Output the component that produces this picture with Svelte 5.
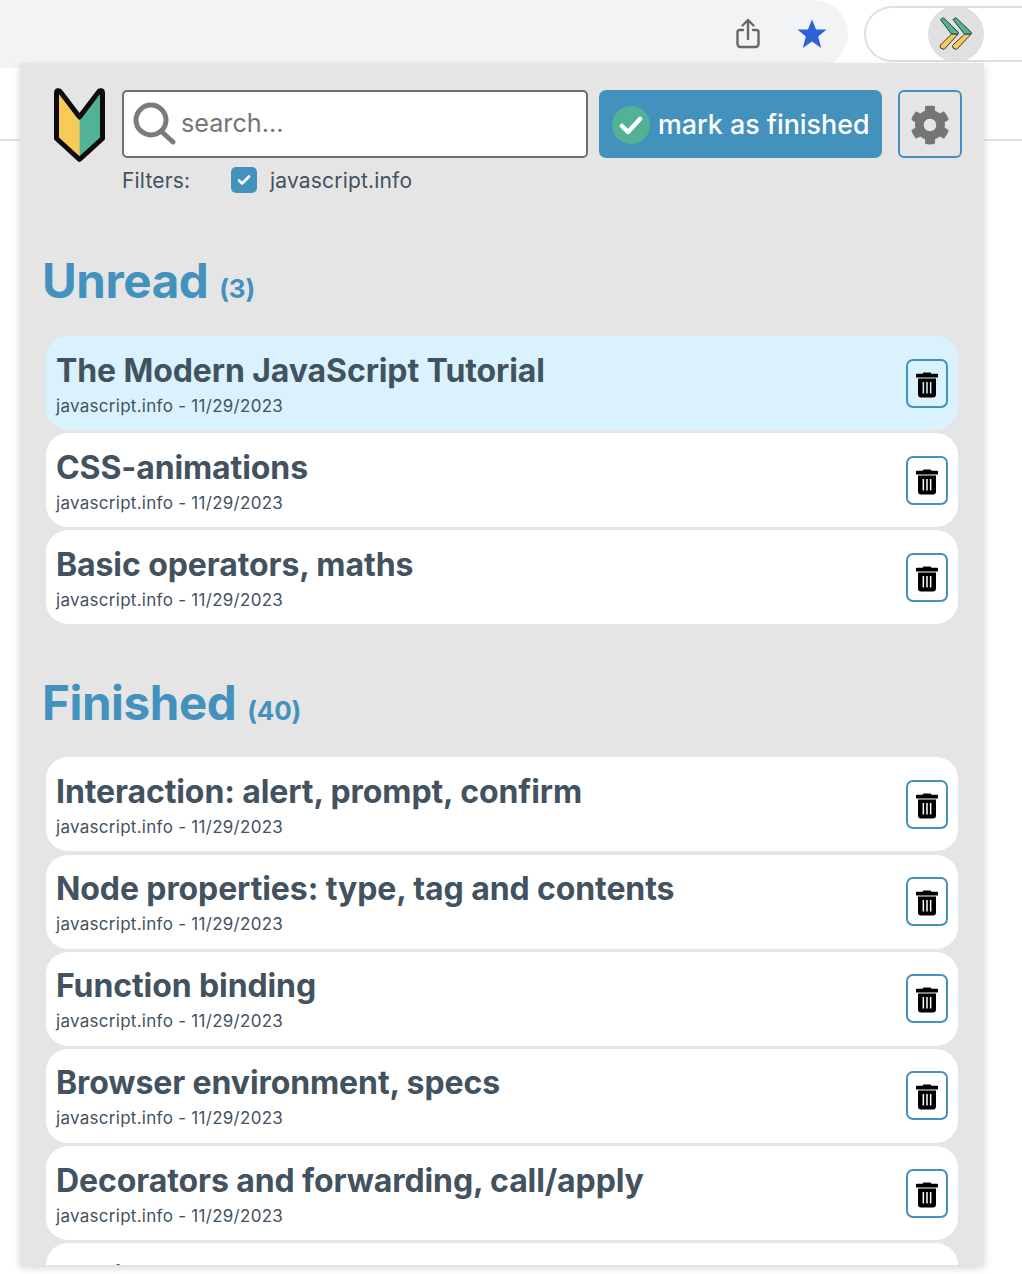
<script>
  const unread = ['The Modern JavaScript Tutorial', 'CSS-animations', 'Basic operators, maths'];
  const finished = ['Interaction: alert, prompt, confirm', 'Node properties: type, tag and contents', 'Function binding', 'Browser environment, specs', 'Decorators and forwarding, call/apply', 'Logical operators'];
  const gear = 'M487.4 315.7l-42.6-24.6c4.3-23.2 4.3-47 0-70.2l42.6-24.6c4.9-2.8 7.1-8.6 5.5-14-11.1-35.6-30-67.8-54.7-94.6-3.8-4.1-10-5.1-14.8-2.3L380.8 110c-17.9-15.4-38.5-27.3-60.8-35.1V25.8c0-5.6-3.9-10.5-9.4-11.7-36.7-8.2-74.3-7.8-109.2 0-5.5 1.2-9.4 6.1-9.4 11.7V75c-22.2 7.9-42.8 19.8-60.8 35.1L88.7 85.5c-4.9-2.8-11-1.9-14.8 2.3-24.7 26.7-43.6 58.9-54.7 94.6-1.7 5.4.6 11.2 5.5 14L67.3 221c-4.3 23.2-4.3 47 0 70.2l-42.6 24.6c-4.9 2.8-7.1 8.6-5.5 14 11.1 35.6 30 67.8 54.7 94.6 3.8 4.1 10 5.1 14.8 2.3l42.6-24.6c17.9 15.4 38.5 27.3 60.8 35.1v49.2c0 5.6 3.9 10.5 9.4 11.7 36.7 8.2 74.3 7.8 109.2 0 5.5-1.2 9.4-6.1 9.4-11.7v-49.2c22.2-7.9 42.8-19.8 60.8-35.1l42.6 24.6c4.9 2.8 11 1.9 14.8-2.3 24.7-26.7 43.6-58.9 54.7-94.6 1.5-5.5-.7-11.3-5.6-14.1zM256 336c-44.1 0-80-35.9-80-80s35.9-80 80-80 80 35.9 80 80-35.9 80-80 80z';
</script>

{#snippet card(title, active)}
  <div class="card" class:active>
    <div class="info">
      <div class="title">{title}</div>
      <div class="meta">javascript.info - 11/29/2023</div>
    </div>
    <button class="del" aria-label="delete">
      <svg width="22" height="26" viewBox="0 0 22 26">
        <path d="M7.500 .5h7l1 1.200h5.200a1.500 1.500 0 0 1 0 3.800H1.300a1.500 1.500 0 0 1 0-3.800h5.200z" fill="#000"/>
        <path fill-rule="evenodd" d="M2 6.500h18v16a3 3 0 0 1-3 3H5a3 3 0 0 1-3-3zM6.600 10v11.500h1.500V10zM10.250 10v11.500h1.500V10zM13.900 10v11.500h1.500V10z" fill="#000"/>
      </svg>
    </button>
  </div>
{/snippet}

<div class="page">
  <div class="chrome">
    <div class="omni">
      <svg class="share" width="24" height="32" viewBox="0 0 24 32" fill="none" stroke="#666" stroke-width="2.400" stroke-linecap="round" stroke-linejoin="round">
        <path d="M7 12H3.500a2 2 0 0 0-2 2v12a3 3 0 0 0 3 3h15a3 3 0 0 0 3-3V14a2 2 0 0 0-2-2H17"/>
        <path d="M12 21V2M6.500 7.500 12 2l5.500 5.500"/>
      </svg>
      <svg class="star" width="30" height="30" viewBox="0 0 30 30"><path d="M15 .5l4.100 10h10.400l-8.300 6.900 3 11.600L15 22.500 5.800 29l3-11.600L.5 10.500h10.400z" fill="#2f62d6"/></svg>
    </div>
    <div class="pill">
      <div class="ext">
        <svg width="34" height="34" viewBox="0 0 34 34" stroke="#2f3b3b" stroke-width="1" stroke-linejoin="round">
          <path d="M1.500 2.500 4.500 .8 19.500 15.500l-.5 1.700H12.500z" fill="#52b295"/>
          <path d="M14 2.500 17 .8 32.500 15.500l-.5 1.700H25.500z" fill="#52b295"/>
          <path d="M12.500 17.200H19L5 32.500 1.500 31 1 28.500z" fill="#f8cb57"/>
          <path d="M25.500 17.200H32L17.500 32.500 14 31l-.5-2.500z" fill="#f8cb57"/>
        </svg>
      </div>
    </div>
  </div>
  <div class="rule"></div>

  <div class="popup">
    <header class="head">
      <svg class="logo" width="54" height="78" viewBox="0 0 54 78">
        <path d="M27.500 32 6 4V51.500L27.500 73z" fill="#f8cb57"/>
        <path d="M27.500 32 49 4V51.500L27.500 73z" fill="#52b295"/>
        <path d="M27.500 31 8.500 6C7 3.800 4.500 4.500 4.500 7V52.500L27.500 73.500 50.500 52.500V7C50.500 4.500 48 3.800 46.500 6z" fill="none" stroke="#0c0c0c" stroke-width="5" stroke-linejoin="round"/>
      </svg>
      <div class="col">
        <div class="row">
          <label class="search">
            <svg width="44" height="46" viewBox="0 0 44 46" fill="none" stroke="#7b7b7b" stroke-width="5" stroke-linecap="round">
              <circle cx="19" cy="19" r="15"/>
              <path d="M30 31 41 41"/>
            </svg>
            <input placeholder="search..." />
          </label>
          <button class="finish">
            <span class="tick">
              <svg width="24" height="20" viewBox="0 0 24 20" fill="none" stroke="#fff" stroke-width="4.500" stroke-linecap="round" stroke-linejoin="round"><path d="M3 11l6 6L21 4"/></svg>
            </span>
            mark as finished
          </button>
          <button class="cog" aria-label="settings">
            <svg width="40" height="40" viewBox="0 0 512 512"><path d={gear} fill="#757575"/></svg>
          </button>
        </div>
        <div class="filters">
          <span class="flabel">Filters:</span>
          <span class="check">
            <svg width="14" height="12" viewBox="0 0 14 12" fill="none" stroke="#fff" stroke-width="2.600" stroke-linecap="round" stroke-linejoin="round"><path d="M2 6.500l3.200 3L12 2.500"/></svg>
          </span>
          <span>javascript.info</span>
        </div>
      </div>
    </header>

    <h2 class="first">Unread <small>(3)</small></h2>
    <div class="list l1">
      {#each unread as t, i}
        {@render card(t, i === 0)}
      {/each}
    </div>

    <h2 class="second">Finished <small>(40)</small></h2>
    <div class="list">
      {#each finished as t}
        {@render card(t, false)}
      {/each}
    </div>
  </div>
</div>

<style>
  :global(body) { margin: 0; background: #fff; }
  .page { position: relative; width: 1022px; height: 1274px; overflow: hidden; font-family: Inter, "Liberation Sans", sans-serif; color: #42525f; }
  .chrome { display: flex; align-items: center; height: 68px; }
  .omni { width: 848px; height: 68px; background: #f1f3f4; border-radius: 0 34px 34px 0; display: flex; align-items: center; justify-content: flex-end; flex-shrink: 0; box-sizing: border-box; padding-right: 21px; gap: 37px; }
  .pill { margin-left: 16px; flex: 1; height: 56px; box-sizing: border-box; border: 2px solid #e0e0e0; border-right: 0; border-radius: 28px 0 0 28px; display: flex; align-items: center; padding-left: 62px; }
  .ext { width: 56px; height: 56px; border-radius: 50%; background: #e0e0e0; flex-shrink: 0; display: flex; align-items: center; justify-content: center; }
  .rule { margin-top: 71px; height: 2px; background: #e3e3e3; }
  .popup { position: absolute; left: 20px; top: 63px; width: 964px; height: 1202px; overflow: hidden; background: #e5e5e5; box-shadow: 0 3px 8px rgba(0,0,0,.16); padding: 23px 26px 0 26px; box-sizing: border-box; }
  .head { display: flex; gap: 16px; margin-left: 6px; margin-right: -4px; }
  .logo { flex-shrink: 0; }
  .col { flex: 1; padding-top: 4px; }
  .row { display: flex; gap: 11px; }
  .search { width: 466px; height: 68px; box-sizing: border-box; background: #fff; border: 2px solid #6f6f6f; border-radius: 5px; display: flex; align-items: center; padding-left: 8px; gap: 5px; flex-shrink: 0; }
  .search input { border: 0; outline: 0; flex: 1; min-width: 0; background: none; font: 25.200px Inter, sans-serif; padding: 0 0 2px; }
  .search input::placeholder { color: #757575; opacity: 1; }
  .finish { width: 283px; height: 68px; flex-shrink: 0; background: #4392bd; color: #fff; border: 0; border-radius: 7px; font: 500 26.800px Inter, sans-serif; display: flex; align-items: center; padding: 0 0 0 13px; gap: 8px; white-space: nowrap; }
  .tick { width: 38px; height: 38px; border-radius: 50%; background: #52b295; display: flex; align-items: center; justify-content: center; flex-shrink: 0; margin-top: 2px; }
  .cog { width: 64px; height: 68px; margin-left: 5px; flex-shrink: 0; box-sizing: border-box; background: none; border: 2px solid #4392bd; border-radius: 6px; padding: 2px 0 0; display: flex; align-items: center; justify-content: center; }
  .filters { display: flex; align-items: center; height: 26px; margin-top: 9px; font-size: 21px; letter-spacing: .18px; }
  .flabel { width: 109px; }
  .check { width: 26px; height: 26px; border-radius: 5px; background: #4392bd; display: flex; align-items: center; justify-content: center; margin-right: 13px; }
  h2 { margin: 0 0 0 -4px; color: #4392bd; font-size: 47.500px; font-weight: 700; line-height: 58px; letter-spacing: -.4px; }
  h2 small { font-size: 26px; font-weight: 700; letter-spacing: -.2px; }
  .first { margin-top: 59px; }
  .second { margin-top: 50px; }
  .list { display: flex; flex-direction: column; gap: 3.200px; margin-top: 17px; }
  .l1 { margin-top: 18px; }
  .card { height: 94px; flex-shrink: 0; box-sizing: border-box; background: #fff; border-radius: 22px; display: flex; align-items: center; justify-content: space-between; padding: 0 10px; }
  .card.active { background: #d9f2fd; }
  .info { padding-top: 1px; }
  .title { font-size: 32px; font-weight: 700; line-height: 40px; letter-spacing: -.1px; white-space: nowrap; }
  .meta { font-size: 17px; line-height: 22px; margin-top: 4px; letter-spacing: .28px; }
  .del { width: 42px; height: 49px; background: none; border: 2px solid #4392bd; border-radius: 7px; padding: 3px 0 0; display: flex; align-items: center; justify-content: center; }
</style>
